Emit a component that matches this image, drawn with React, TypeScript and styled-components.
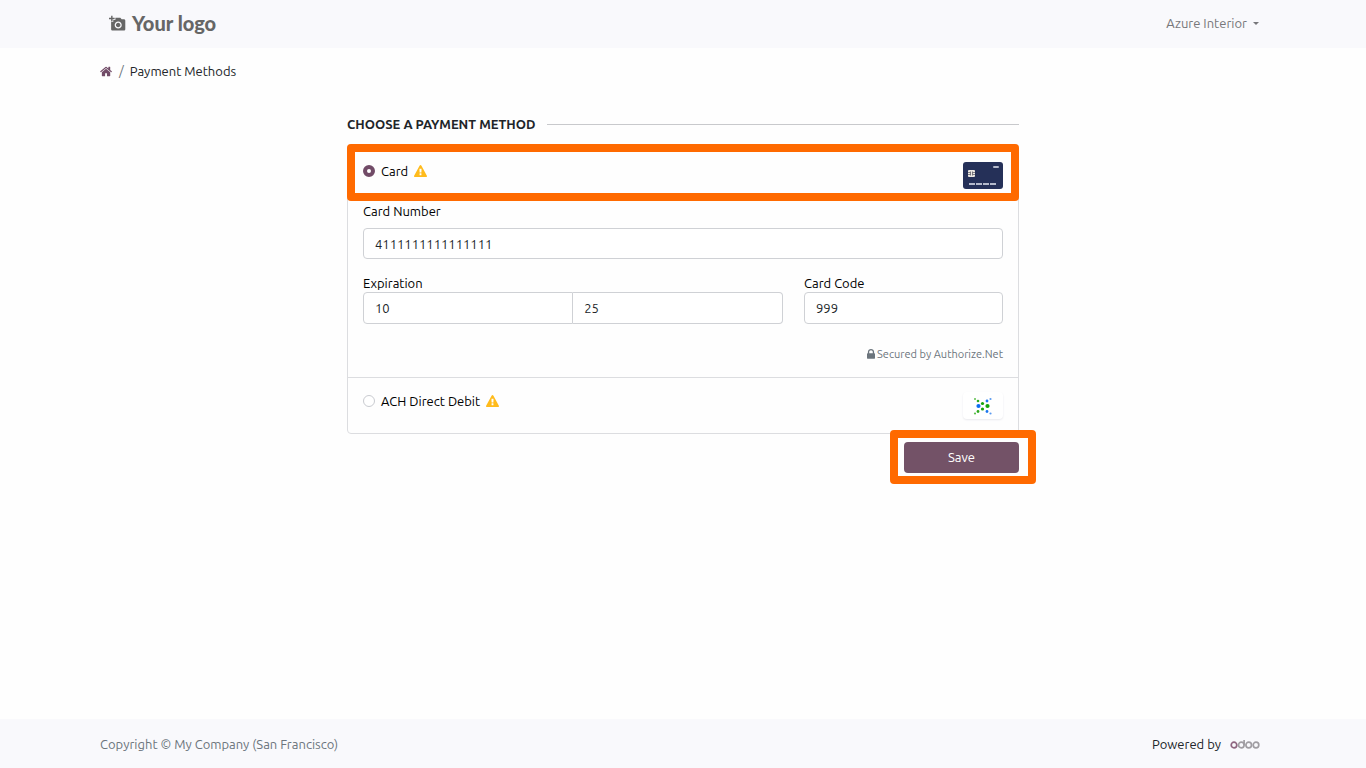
import React from "react";
import styled, { createGlobalStyle } from "styled-components";
import { MdAddAPhoto } from "react-icons/md";

const GlobalStyle = createGlobalStyle`
  *, *::before, *::after { box-sizing: border-box; }
  body {
    margin: 0;
    background: #fefefe;
    color: #212529;
    font-family: Ubuntu, "Noto Sans", "Liberation Sans", sans-serif;
    font-size: 13px;
    line-height: 18px;
  }
  input, button { font: inherit; color: inherit; }
`;

const Page = styled.div`
  min-height: 100vh;
  display: flex;
  flex-direction: column;
`;

const Container = styled.div`
  display: flex;
  align-items: center;
  justify-content: space-between;
  margin: 0 100px;
`;

const Header = styled.header`
  background: #f9f9fc;
  padding: 8px 0 10px;
`;

const Footer = styled.footer`
  background: #f9f9fc;
  margin-top: auto;
  padding: 16px 0 15px;
`;

const Logo = styled.a`
  display: flex;
  align-items: center;
  gap: 6px;
  height: 30px;
  padding-left: 9px;
  color: #666;
  font-family: Lato, sans-serif;
  font-size: 20px;
  font-weight: 900;
  text-decoration: none;
`;

const UserButton = styled.button`
  display: flex;
  align-items: center;
  gap: 6px;
  padding: 0 7px;
  border: 0;
  background: none;
  color: #77777a;

  &::after {
    content: "";
    border: 3px solid transparent;
    border-top-color: currentColor;
    border-bottom: 0;
  }
`;

const Breadcrumb = styled.nav`
  display: flex;
  align-items: center;
  gap: 6px;
  margin: 14px 100px 0;
  height: 18px;

  a {
    display: flex;
    color: #714b67;
  }
`;

const Slash = styled.span`
  color: #6c757d;
`;

const Form = styled.form`
  width: 100%;
  max-width: 672px;
  margin: 35px auto 0;
`;

const Title = styled.h1`
  display: flex;
  align-items: center;
  gap: 12px;
  margin: 0 0 11px;
  font-size: 13px;
  font-weight: 700;
  line-height: 18px;
  text-transform: uppercase;

  &::after {
    content: "";
    flex: 1;
    height: 1px;
    background: #c8c9cc;
  }
`;

const Methods = styled.div`
  position: relative;
  border: 1px solid #dcdde0;
  border-radius: 4px;
`;

const Highlight = styled.div<{ $inset: string }>`
  position: absolute;
  inset: ${(p) => p.$inset};
  border: 8px solid #ff6a00;
  border-radius: 4px;
  pointer-events: none;
`;

const CardHighlight = styled(Highlight)`
  height: 57px;
`;

const CardSection = styled.section`
  border-bottom: 1px solid #dcdde0;
`;

const MethodRow = styled.div<{ $pad: string }>`
  display: flex;
  justify-content: space-between;
  align-items: flex-start;
  padding: ${(p) => p.$pad};
`;

const MethodLabel = styled.label`
  display: flex;
  align-items: center;
  gap: 6px;
  color: #000;

  svg { color: #ffbb1c; }
`;

const Radio = styled.input`
  appearance: none;
  width: 12px;
  height: 12px;
  margin: 0;
  border: 1px solid #c9cbd0;
  border-radius: 50%;
  background: #fff;

  &:checked { border: 4px solid #714b67; }
`;

const Fields = styled.div`
  padding: 0 15px 14px;
`;

const Row = styled.div`
  display: flex;
  gap: 21px;
  margin-top: 15px;
`;

const Group = styled.div<{ $grow: number }>`
  flex: ${(p) => p.$grow} 1 0;
  min-width: 0;
`;

const FieldLabel = styled.label<{ $space?: boolean }>`
  display: block;
  margin-bottom: ${(p) => (p.$space ? "8px" : "0")};
  color: #000;
`;

const TextInput = styled.input<{ $short?: boolean }>`
  display: block;
  width: 100%;
  min-width: 0;
  height: ${(p) => (p.$short ? "31px" : "32px")};
  padding: 0 11px;
  border: 1px solid #cfd1d5;
  border-radius: 4px;
  background: #fff;
`;

const Joined = styled.div`
  display: flex;

  input:first-child { border-radius: 4px 0 0 4px; }
  input:last-child { border-radius: 0 4px 4px 0; border-left: 0; }
`;

const Secured = styled.p`
  display: flex;
  align-items: center;
  justify-content: flex-end;
  gap: 2px;
  margin: 21px 0 0;
  color: #6c757d;
  font-size: 11px;
`;

const AchLogo = styled.svg`
  border-radius: 4px;
  background: #fff;
  box-shadow: 0 1px 2px #e9e9ee;
`;

const Actions = styled.div`
  display: flex;
  justify-content: flex-end;
  margin-top: 8px;
`;

const SaveWrap = styled.div`
  position: relative;
  background: #fff;
`;

const SaveButton = styled.button`
  display: block;
  width: 115px;
  height: 31px;
  padding: 0 0 1px;
  border: 0;
  border-radius: 4px;
  background: #735267;
  color: #fff;
`;

const Copyright = styled.span`
  color: #6c757d;
`;

const Powered = styled.div`
  display: flex;
  align-items: center;
  gap: 9px;
  padding-right: 6px;

  a { display: flex; }
`;

const dots: [number, number, number, string][] = [
  [12, 7, 1, "#5cbf4c"], [15, 9, 1.3, "#2faa1e"], [19.5, 11.5, 1.6, "#14a30b"],
  [24, 9, 1.4, "#1a76ee"], [27.5, 7, 1.1, "#5b9bf0"], [15.5, 14, 2.1, "#0c6cf2"],
  [24.5, 14, 2.1, "#14a30b"], [19.5, 17, 1.6, "#14a30b"], [15, 19.5, 1.4, "#2faa1e"],
  [12, 21.5, 1.1, "#5cbf4c"], [24, 19.5, 1.4, "#1a76ee"], [27.5, 21.5, 1.1, "#5b9bf0"],
];

function WarningIcon() {
  return (
    <svg width="13" height="13" viewBox="0 0 1792 1792" fill="currentColor" aria-hidden="true">
      <path d="M1024 1375v-190q0-14-9.5-23.5t-22.5-9.5h-192q-13 0-22.5 9.5t-9.5 23.5v190q0 14 9.5 23.5t22.5 9.5h192q13 0 22.5-9.5t9.5-23.5zm-2-374l18-459q0-12-10-19-13-11-24-11h-220q-11 0-24 11-10 7-10 21l17 457q0 10 10 16.5t24 6.5h185q14 0 23.5-6.5t10.5-16.5zm-14-934l768 1408q35 63-2 126-17 29-46.5 46t-63.5 17h-1536q-34 0-63.5-17t-46.5-46q-37-63-2-126l768-1408q17-31 47-49t65-18 65 18 47 49z" />
    </svg>
  );
}

function HomeIcon() {
  return (
    <svg width="13" height="13" viewBox="64 0 1792 1792" fill="currentColor" aria-hidden="true">
      <path d="M1472 992v480q0 26-19 45t-45 19h-384v-384h-256v384h-384q-26 0-45-19t-19-45v-480q0-1 .5-3t.5-3l575-474 575 474q1 2 1 6zm223-69l-62 74q-8 9-21 11h-3q-13 0-21-7l-692-577-692 577q-12 8-24 7-13-2-21-11l-62-74q-8-10-7-23.5t11-21.5l719-599q32-26 76-26t76 26l244 204v-195q0-14 9-23t23-9h192q14 0 23 9t9 23v408l219 182q10 8 11 21.5t-7 23.5z" />
    </svg>
  );
}

function LockIcon() {
  return (
    <svg width="8" height="12" viewBox="320 0 1152 1728" fill="currentColor" aria-hidden="true">
      <path d="M640 768h512v-192q0-106-75-181t-181-75-181 75-75 181v192zm832 96v576q0 40-28 68t-68 28h-960q-40 0-68-28t-28-68v-576q0-40 28-68t68-28h32v-192q0-184 132-316t316-132 316 132 132 316v192h32q40 0 68 28t28 68z" />
    </svg>
  );
}

function CardImage() {
  return (
    <svg width="40" height="27" viewBox="0 0 40 27" role="img" aria-label="Card">
      <rect width="40" height="27" rx="3" fill="#253058" />
      <rect x="30" y="4" width="6" height="2" rx="1" fill="#b5bacb" />
      <rect x="5" y="8" width="7" height="7" rx="1" fill="#ece8e2" />
      <path d="M5 10.5h2.5M5 12.5h2.5M9.5 10.5H12M9.5 12.5H12M7.5 9.5v4M9.5 9.5v4" stroke="#51505c" strokeWidth="0.7" />
      <path d="M6 22h6M13 22h6M20 22h6M27 22h6" stroke="#b5bacb" strokeWidth="2" />
    </svg>
  );
}

function OdooLogo() {
  return (
    <svg width="30" height="12" viewBox="0 0 30 12" fill="none" stroke="#a09da2" strokeWidth="1.7" role="img" aria-label="odoo">
      <circle cx="4" cy="7" r="2.8" stroke="#8f6680" />
      <circle cx="11.3" cy="7" r="2.8" />
      <path d="M14.1 2v5" />
      <circle cx="18.7" cy="7" r="2.8" />
      <circle cx="26" cy="7" r="2.8" />
    </svg>
  );
}

export default function App() {
  return (
    <Page>
      <GlobalStyle />
      <Header>
        <Container>
          <Logo href="#">
            <MdAddAPhoto size={17} />
            Your logo
          </Logo>
          <UserButton type="button">Azure Interior</UserButton>
        </Container>
      </Header>
      <Breadcrumb aria-label="Breadcrumb">
        <a href="#" aria-label="Home"><HomeIcon /></a>
        <Slash>/</Slash>
        <span>Payment Methods</span>
      </Breadcrumb>
      <main>
        <Form>
          <Title>Choose a payment method</Title>
          <Methods>
            <CardSection>
              <MethodRow $pad="17px 15px 13px">
                <MethodLabel>
                  <Radio type="radio" name="method" defaultChecked />
                  Card
                  <WarningIcon />
                </MethodLabel>
                <CardImage />
              </MethodRow>
              <Fields>
                <FieldLabel htmlFor="number" $space>Card Number</FieldLabel>
                <TextInput id="number" $short defaultValue="4111111111111111" />
                <Row>
                  <Group $grow={420}>
                    <FieldLabel htmlFor="month">Expiration</FieldLabel>
                    <Joined>
                      <TextInput id="month" defaultValue="10" />
                      <TextInput aria-label="Expiration year" defaultValue="25" />
                    </Joined>
                  </Group>
                  <Group $grow={199}>
                    <FieldLabel htmlFor="code">Card Code</FieldLabel>
                    <TextInput id="code" defaultValue="999" />
                  </Group>
                </Row>
                <Secured>
                  <LockIcon />
                  Secured by Authorize.Net
                </Secured>
              </Fields>
            </CardSection>
            <MethodRow $pad="14px 15px">
              <MethodLabel>
                <Radio type="radio" name="method" />
                ACH Direct Debit
                <WarningIcon />
              </MethodLabel>
              <AchLogo width="40" height="27" viewBox="0 0 40 27" role="img" aria-label="ACH">
                {dots.map(([x, y, r, color]) => (
                  <circle key={`${x}-${y}`} cx={x} cy={y} r={r} fill={color} />
                ))}
              </AchLogo>
            </MethodRow>
            <CardHighlight $inset="-1px -1px auto -1px" />
          </Methods>
          <Actions>
            <SaveWrap>
              <SaveButton type="button">Save</SaveButton>
              <Highlight $inset="-12px -17px -11px -14px" />
            </SaveWrap>
          </Actions>
        </Form>
      </main>
      <Footer>
        <Container>
          <Copyright>Copyright © My Company (San Francisco)</Copyright>
          <Powered>
            Powered by
            <a href="#"><OdooLogo /></a>
          </Powered>
        </Container>
      </Footer>
    </Page>
  );
}
